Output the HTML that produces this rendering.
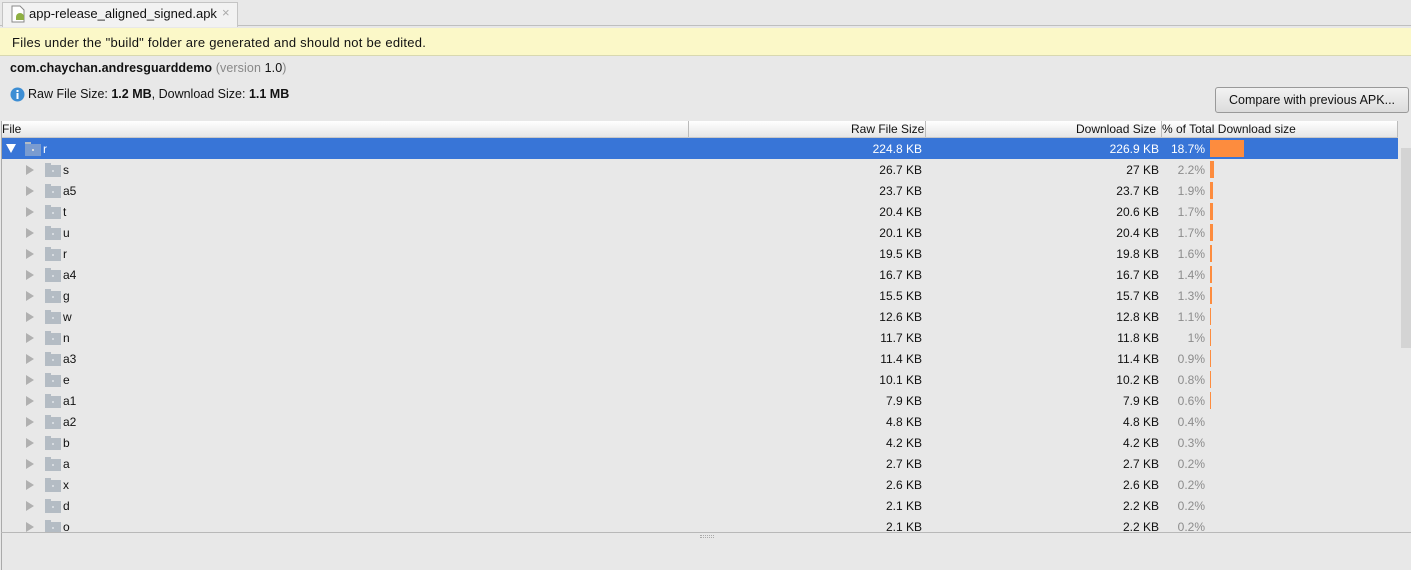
<!DOCTYPE html>
<html><head><style>
*{margin:0;padding:0;box-sizing:border-box}
body{width:1411px;height:570px;background:#e8e8e8;font-family:"Liberation Sans",sans-serif;font-size:12px;color:#111;position:relative;overflow:hidden}
.a{position:absolute;white-space:nowrap}
.row{position:absolute;left:2px;width:1396px;height:21px}
.row span{position:absolute;top:4px;line-height:15px}
.tri{position:absolute;left:24px;top:6px;width:0;height:0;border-left:8px solid #b0b0b0;border-top:5px solid transparent;border-bottom:5px solid transparent}
.fold{position:absolute;left:43px;top:6px;width:16px;height:12px;background:#b4bcc4}
.fold:before{content:"";position:absolute;left:0;top:-2px;width:6px;height:2px;background:#b4bcc4}
.fold:after{content:"";position:absolute;left:7px;top:5px;width:2px;height:2px;background:#d6dbe0}
.n{left:61px}
.rs{right:476px;text-align:right}
.ds{right:239px;text-align:right}
.pc{right:193px;text-align:right;color:#8c8c8c}
.bar{position:absolute;left:1208px;top:2px;height:17px;background:#fd8c3e}
</style></head><body>
<div class="a" style="left:0;top:0;width:1411px;height:26px;background:#e8e8e8;border-bottom:1px solid #bfbfbf"></div>
<div class="a" style="left:2px;top:2px;width:236px;height:25px;background:#f2f2f2;border:1px solid #c4c4c4;border-bottom:none"></div>
<svg class="a" style="left:11px;top:5px" width="16" height="19"><path d="M1 1h8l4 4v12H1z" fill="#fff" stroke="#888"/><path d="M5 12a4 4 0 0 1 8 0v3H5z" fill="#8fb043"/></svg>
<div class="a" style="left:29px;top:6px;font-size:13px">app-release_aligned_signed.apk</div>
<div class="a" style="left:222px;top:5px;color:#aaa;font-size:13px">×</div>
<div class="a" style="left:0;top:28px;width:1411px;height:28px;background:#fbf8c8;border-bottom:1px solid #d8d8b0"></div>
<div class="a" style="left:12px;top:35px;font-size:13px;letter-spacing:0.25px">Files under the "build" folder are generated and should not be edited.</div>
<div class="a" style="left:10px;top:61px;font-size:12.5px;letter-spacing:0.1px"><b>com.chaychan.andresguarddemo</b> <span style="color:#888">(version </span>1.0<span style="color:#888">)</span></div>
<svg class="a" style="left:10px;top:87px" width="15" height="15"><circle cx="7.5" cy="7.5" r="7" fill="#3d8ed4"/><rect x="6.5" y="6" width="2" height="6" fill="#fff"/><rect x="6.5" y="3" width="2" height="2" fill="#fff"/></svg>
<div class="a" style="left:28px;top:87px;font-size:12.5px">Raw File Size: <b>1.2 MB</b>, Download Size: <b>1.1 MB</b></div>
<div class="a" style="left:1215px;top:87px;width:194px;height:26px;border:1px solid #999;border-radius:3px;background:linear-gradient(#f2f2f2,#dcdcdc);text-align:center;line-height:24px;font-size:12.5px">Compare with previous APK...</div>
<div class="a" style="left:1px;top:121px;width:1px;height:449px;background:#aaa"></div>
<div class="a" style="left:2px;top:121px;width:1396px;height:17px;background:linear-gradient(#fff,#e6e6e6);border-bottom:1px solid #c8c8c8"></div>
<div class="a" style="left:2px;top:122px">File</div>
<div class="a" style="left:688px;top:121px;width:1px;height:16px;background:#bbb"></div>
<div class="a" style="left:851px;top:122px">Raw File Size</div>
<div class="a" style="left:925px;top:121px;width:1px;height:16px;background:#bbb"></div>
<div class="a" style="left:1076px;top:122px">Download Size</div>
<div class="a" style="left:1161px;top:121px;width:1px;height:16px;background:#bbb"></div>
<div class="a" style="left:1162px;top:122px">% of Total Download size</div>
<div class="a" style="left:1397px;top:121px;width:1px;height:16px;background:#bbb"></div>
<div class="a" style="left:1401px;top:148px;width:10px;height:200px;background:#d4d4d4"></div>
<div class="a" style="left:0;top:138px;width:1400px;height:394px;overflow:hidden">
<div class="row" style="top:0;background:#3875d7;color:#fff"><div style="position:absolute;left:4px;top:6px;border-top:9px solid #fff;border-left:5px solid transparent;border-right:5px solid transparent"></div><div class="fold" style="left:23px;background:#7a9cd0"></div><span style="left:41px">r</span><span class="rs">224.8 KB</span><span class="ds">226.9 KB</span><span class="pc" style="color:#fff">18.7%</span><div class="bar" style="width:34px"></div></div>
<div class="row" style="top:21px"><div class="tri"></div><div class="fold"></div><span class="n">s</span><span class="rs">26.7 KB</span><span class="ds">27 KB</span><span class="pc">2.2%</span><div class="bar" style="width:4px"></div></div>
<div class="row" style="top:42px"><div class="tri"></div><div class="fold"></div><span class="n">a5</span><span class="rs">23.7 KB</span><span class="ds">23.7 KB</span><span class="pc">1.9%</span><div class="bar" style="width:3px"></div></div>
<div class="row" style="top:63px"><div class="tri"></div><div class="fold"></div><span class="n">t</span><span class="rs">20.4 KB</span><span class="ds">20.6 KB</span><span class="pc">1.7%</span><div class="bar" style="width:3px"></div></div>
<div class="row" style="top:84px"><div class="tri"></div><div class="fold"></div><span class="n">u</span><span class="rs">20.1 KB</span><span class="ds">20.4 KB</span><span class="pc">1.7%</span><div class="bar" style="width:3px"></div></div>
<div class="row" style="top:105px"><div class="tri"></div><div class="fold"></div><span class="n">r</span><span class="rs">19.5 KB</span><span class="ds">19.8 KB</span><span class="pc">1.6%</span><div class="bar" style="width:2px"></div></div>
<div class="row" style="top:126px"><div class="tri"></div><div class="fold"></div><span class="n">a4</span><span class="rs">16.7 KB</span><span class="ds">16.7 KB</span><span class="pc">1.4%</span><div class="bar" style="width:2px"></div></div>
<div class="row" style="top:147px"><div class="tri"></div><div class="fold"></div><span class="n">g</span><span class="rs">15.5 KB</span><span class="ds">15.7 KB</span><span class="pc">1.3%</span><div class="bar" style="width:2px"></div></div>
<div class="row" style="top:168px"><div class="tri"></div><div class="fold"></div><span class="n">w</span><span class="rs">12.6 KB</span><span class="ds">12.8 KB</span><span class="pc">1.1%</span><div class="bar" style="width:1px"></div></div>
<div class="row" style="top:189px"><div class="tri"></div><div class="fold"></div><span class="n">n</span><span class="rs">11.7 KB</span><span class="ds">11.8 KB</span><span class="pc">1%</span><div class="bar" style="width:1px"></div></div>
<div class="row" style="top:210px"><div class="tri"></div><div class="fold"></div><span class="n">a3</span><span class="rs">11.4 KB</span><span class="ds">11.4 KB</span><span class="pc">0.9%</span><div class="bar" style="width:1px"></div></div>
<div class="row" style="top:231px"><div class="tri"></div><div class="fold"></div><span class="n">e</span><span class="rs">10.1 KB</span><span class="ds">10.2 KB</span><span class="pc">0.8%</span><div class="bar" style="width:1px"></div></div>
<div class="row" style="top:252px"><div class="tri"></div><div class="fold"></div><span class="n">a1</span><span class="rs">7.9 KB</span><span class="ds">7.9 KB</span><span class="pc">0.6%</span><div class="bar" style="width:1px"></div></div>
<div class="row" style="top:273px"><div class="tri"></div><div class="fold"></div><span class="n">a2</span><span class="rs">4.8 KB</span><span class="ds">4.8 KB</span><span class="pc">0.4%</span></div>
<div class="row" style="top:294px"><div class="tri"></div><div class="fold"></div><span class="n">b</span><span class="rs">4.2 KB</span><span class="ds">4.2 KB</span><span class="pc">0.3%</span></div>
<div class="row" style="top:315px"><div class="tri"></div><div class="fold"></div><span class="n">a</span><span class="rs">2.7 KB</span><span class="ds">2.7 KB</span><span class="pc">0.2%</span></div>
<div class="row" style="top:336px"><div class="tri"></div><div class="fold"></div><span class="n">x</span><span class="rs">2.6 KB</span><span class="ds">2.6 KB</span><span class="pc">0.2%</span></div>
<div class="row" style="top:357px"><div class="tri"></div><div class="fold"></div><span class="n">d</span><span class="rs">2.1 KB</span><span class="ds">2.2 KB</span><span class="pc">0.2%</span></div>
<div class="row" style="top:378px"><div class="tri"></div><div class="fold"></div><span class="n">o</span><span class="rs">2.1 KB</span><span class="ds">2.2 KB</span><span class="pc">0.2%</span></div>
</div>
<div class="a" style="left:1px;top:532px;width:1410px;height:1px;background:#b8b8b8"></div>
<div class="a" style="left:700px;top:535px;width:14px;height:3px;border-top:1px dotted #aaa;border-bottom:1px dotted #aaa"></div>
</body></html>
